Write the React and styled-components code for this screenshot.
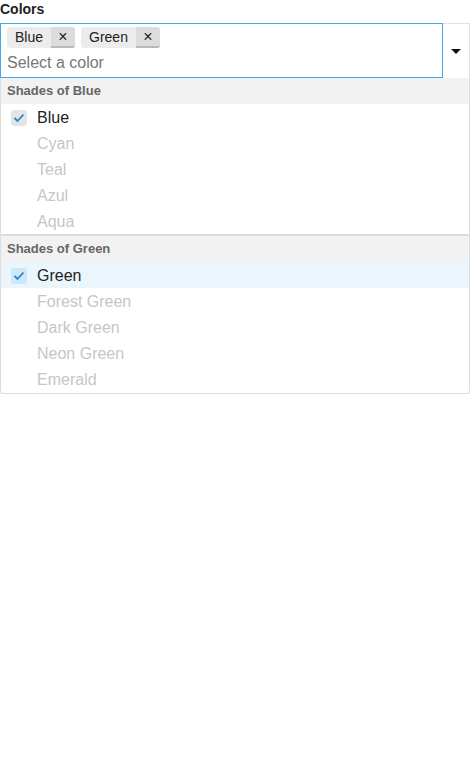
import React from 'react'
import styled, { createGlobalStyle } from 'styled-components'

const groups = [
  {
    title: 'Shades of Blue',
    items: [
      { label: 'Blue', selected: true },
      { label: 'Cyan' },
      { label: 'Teal' },
      { label: 'Azul' },
      { label: 'Aqua' },
    ],
  },
  {
    title: 'Shades of Green',
    items: [
      { label: 'Green', selected: true, focused: true },
      { label: 'Forest Green' },
      { label: 'Dark Green' },
      { label: 'Neon Green' },
      { label: 'Emerald' },
    ],
  },
]

const Check = () => (
  <svg width="12" height="10" viewBox="0 0 12 10">
    <polyline points="1.5,5 4.5,8 10.5,1.5" fill="none" stroke="#1e8ad6" strokeWidth="1.8" />
  </svg>
)

export default function App() {
  return (
    <>
      <GlobalStyle />
      <Wrapper>
        <Label>Colors</Label>
        <Combo>
          <InputBox>
            <Chips>
              {['Blue', 'Green'].map((c) => (
                <Chip key={c}>
                  <ChipText>{c}</ChipText>
                  <ChipRemove>×</ChipRemove>
                </Chip>
              ))}
            </Chips>
            <Placeholder>Select a color</Placeholder>
          </InputBox>
          <Toggle>
            <Caret />
          </Toggle>
        </Combo>
        <Menu>
          {groups.map((g, gi) => (
            <Group key={g.title} first={gi === 0}>
              <GroupTitle>{g.title}</GroupTitle>
              {g.items.map((it) => (
                <Option key={it.label} focused={it.focused}>
                  <Box focused={it.focused}>{it.selected && <Check />}</Box>
                  <OptionText disabled={!it.selected}>{it.label}</OptionText>
                </Option>
              ))}
            </Group>
          ))}
        </Menu>
      </Wrapper>
    </>
  )
}

const GlobalStyle = createGlobalStyle`
  body {
    margin: 0;
    font-family: "Liberation Sans", Arial, sans-serif;
    background: #fff;
  }
`

const Wrapper = styled.div`
  width: 470px;
`

const Label = styled.div`
  font-size: 14px;
  font-weight: bold;
  color: #222;
  line-height: 18px;
  margin-bottom: 5px;
`

const Combo = styled.div`
  display: flex;
  height: 55px;
`

const InputBox = styled.div`
  flex: 1;
  border: 1px solid #4aa6e2;
  padding: 3px 6px 0;
  display: flex;
  flex-direction: column;
`

const Chips = styled.div`
  display: flex;
  gap: 6px;
`

const Chip = styled.div`
  display: flex;
  height: 21px;
  border-radius: 3px;
  overflow: hidden;
  background: #ececec;
  font-size: 14px;
  color: #222;
`

const ChipText = styled.span`
  padding: 0 8px;
  line-height: 21px;
`

const ChipRemove = styled.span`
  width: 24px;
  text-align: center;
  background: #dcdcdc;
  border-bottom: 2px solid #b9b9b9;
  line-height: 19px;
  font-size: 16px;
  box-sizing: border-box;
`

const Placeholder = styled.div`
  font-size: 16px;
  color: #777;
  line-height: 28px;
  padding-top: 1px;
`

const Toggle = styled.div`
  width: 26px;
  border-top: 1px solid #e2e2e2;
  border-right: 1px solid #e2e2e2;
  display: flex;
  align-items: center;
  justify-content: center;
  padding-top: 1px;
`

const Caret = styled.span`
  width: 0;
  height: 0;
  border-left: 5px solid transparent;
  border-right: 5px solid transparent;
  border-top: 5px solid #111;
`

const Menu = styled.div`
  border: 1px solid #dedede;
  border-top: none;
  border-radius: 0 0 3px 3px;
  box-shadow: 0 2px 3px rgba(0, 0, 0, 0.08);
  padding-bottom: 1px;
`

const Group = styled.div`
  border-top: ${(p) => (p.first ? 'none' : '2px solid #dcdcdc')};
`

const GroupTitle = styled.div`
  background: #f2f2f2;
  color: #666;
  font-size: 13px;
  font-weight: bold;
  line-height: 25px;
  height: 26px;
  padding-left: 6px;
`

const Option = styled.div`
  display: flex;
  align-items: center;
  box-sizing: border-box;
  height: 26px;
  padding: 1px 0 0 10px;
  background: ${(p) => (p.focused ? '#eaf5fc' : 'transparent')};
`

const Box = styled.span`
  width: 16px;
  height: 16px;
  border-radius: 3px;
  background: ${(p) => (p.focused ? '#cde8f8' : '#e4e4e4')};
  display: flex;
  align-items: center;
  justify-content: center;
  margin-right: 10px;
  visibility: ${(p) => (p.children ? 'visible' : 'hidden')};
`

const OptionText = styled.span`
  font-size: 16px;
  color: ${(p) => (p.disabled ? '#c6c6c6' : '#222')};
`
